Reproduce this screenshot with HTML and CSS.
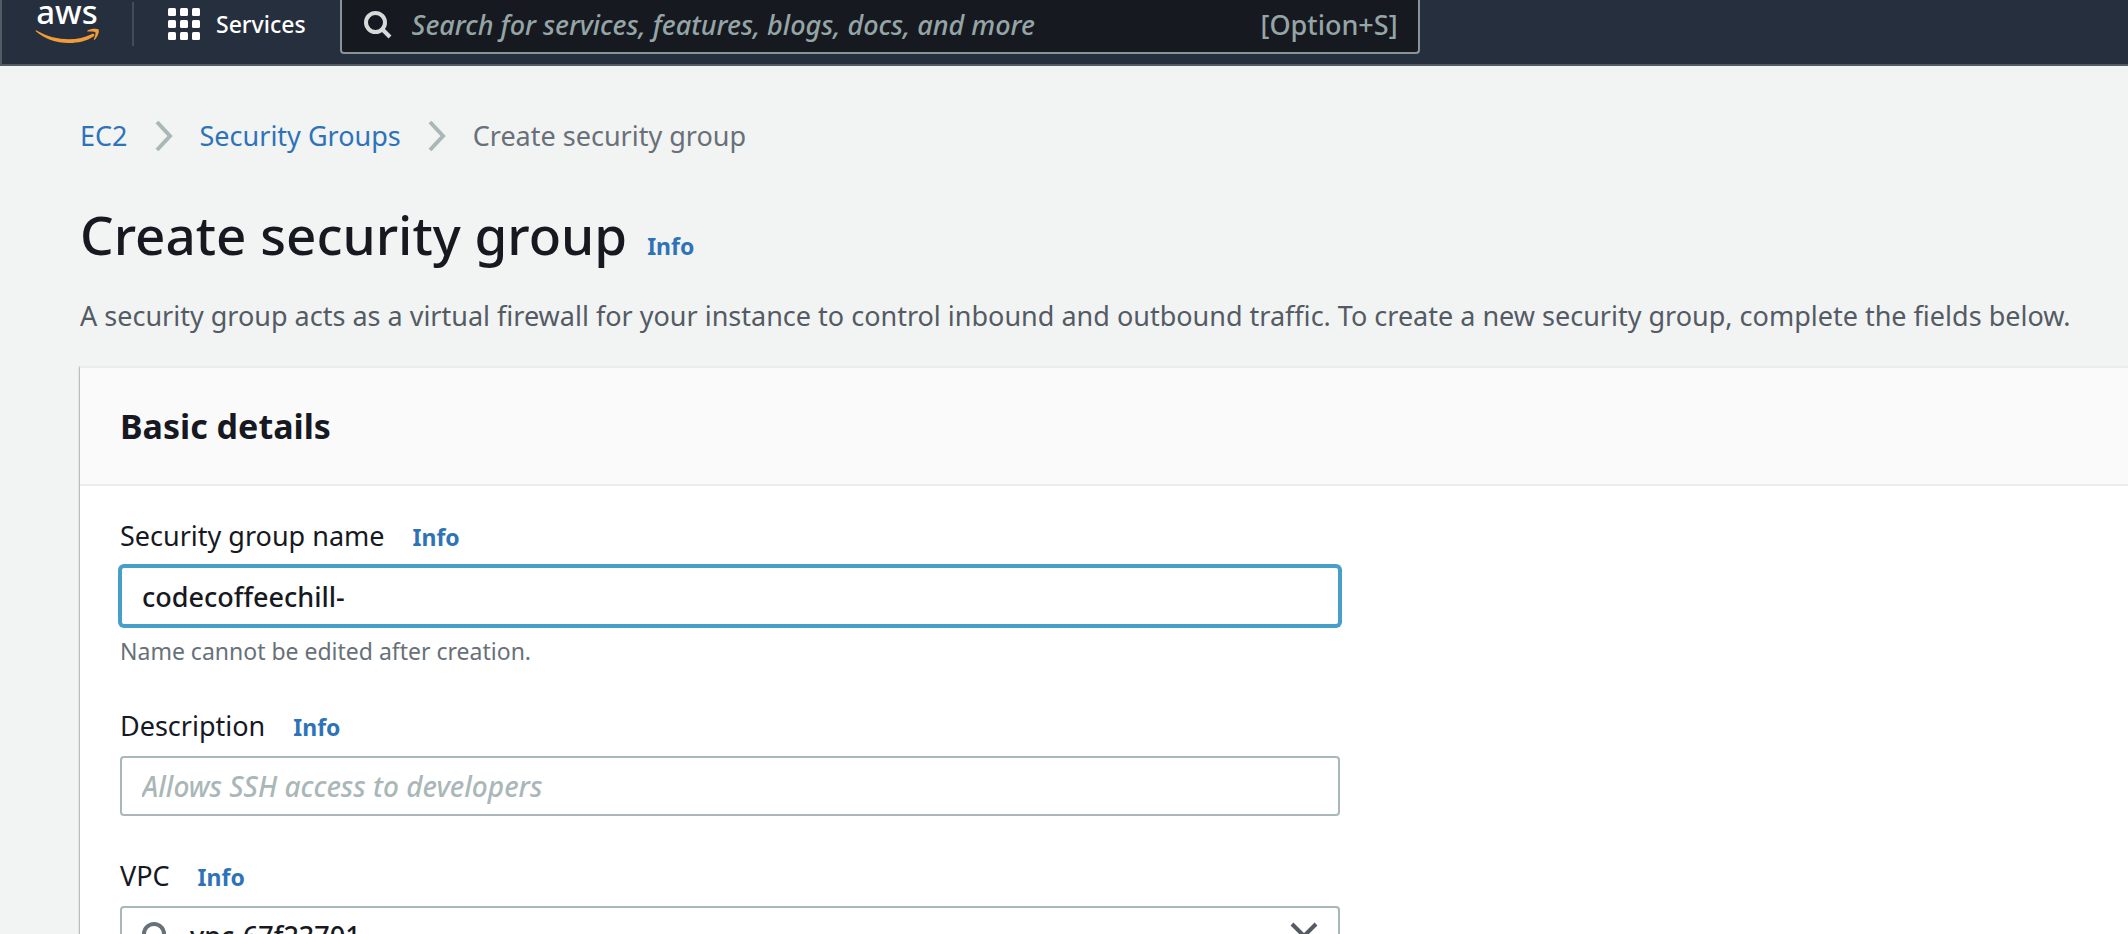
FILE: index.html
```html
<!DOCTYPE html>
<html lang="en">
<head>
<meta charset="utf-8">
<title>Create security group</title>
<link rel="stylesheet" href="styles.css">
</head>
<body>
<header class="topbar">
  <a class="logo" href="#" aria-label="AWS home">
    <svg width="68" height="48" viewBox="0 0 68 48" aria-hidden="true">
      <text class="logo-text" x="33" y="24" text-anchor="middle">aws</text>
      <path fill="#f19d37" d="M2.500 30.500C22 41.500 43 41.500 58 34C60 33 61.500 35 59.500 36.500C53 41 44 43 35 43C21.500 43 10.500 38.500 2 31.500C1.300 30.700 1.800 30 2.500 30.500Z"/>
      <path fill="#f19d37" d="M53.500 30.400C56.500 28.400 63.500 28.200 64.600 29.600C65.600 31.200 63.800 37 61 39.500C60 40.200 59.500 39.900 60 38.800C61 36.500 62 33.200 61.300 32.200C60.500 31.200 56.800 31.300 54.200 31.600C53.200 31.700 52.800 30.900 53.500 30.400Z"/>
    </svg>
  </a>
  <button class="services" type="button">
    <svg width="32" height="32" viewBox="0 0 32 32" fill="#fff" aria-hidden="true">
      <rect width="8" height="8" rx="1.500"/><rect x="12" width="8" height="8" rx="1.500"/><rect x="24" width="8" height="8" rx="1.500"/>
      <rect y="12" width="8" height="8" rx="1.500"/><rect x="12" y="12" width="8" height="8" rx="1.500"/><rect x="24" y="12" width="8" height="8" rx="1.500"/>
      <rect y="24" width="8" height="8" rx="1.500"/><rect x="12" y="24" width="8" height="8" rx="1.500"/><rect x="24" y="24" width="8" height="8" rx="1.500"/>
    </svg>
    <span>Services</span>
  </button>
  <label class="search">
    <svg width="28" height="28" viewBox="0 0 28 28" fill="none" stroke="#d5dbdb" stroke-width="4" aria-hidden="true">
      <circle cx="11.500" cy="11.500" r="9.500"/><path d="M18 18l8 8"/>
    </svg>
    <input class="search-input" type="text" aria-label="Search" placeholder="Search for services, features, blogs, docs, and more">
    <span class="shortcut">[Option+S]</span>
  </label>
</header>

<main class="page">
  <nav class="crumbs" aria-label="Breadcrumb">
    <a href="#">EC2</a>
    <svg width="20" height="32" viewBox="0 0 20 32" fill="none" stroke="#aab7b8" stroke-width="4" aria-hidden="true"><path d="M3 2l13 14L3 30"/></svg>
    <a href="#">Security Groups</a>
    <svg width="20" height="32" viewBox="0 0 20 32" fill="none" stroke="#aab7b8" stroke-width="4" aria-hidden="true"><path d="M3 2l13 14L3 30"/></svg>
    <span>Create security group</span>
  </nav>

  <div class="title-row">
    <h1>Create security group</h1>
    <a class="info" href="#">Info</a>
  </div>
  <p class="lead">A security group acts as a virtual firewall for your instance to control inbound and outbound traffic. To create a new security group, complete the fields below.</p>

  <section class="card">
    <h2>Basic details</h2>
    <form class="fields">
      <div class="field">
        <div class="label-row"><label for="name">Security group name</label><a class="info" href="#">Info</a></div>
        <input class="box active" id="name" type="text" value="codecoffeechill-" spellcheck="false">
        <p class="hint">Name cannot be edited after creation.</p>
      </div>
      <div class="field">
        <div class="label-row"><label for="description">Description</label><a class="info" href="#">Info</a></div>
        <input class="box" id="description" type="text" placeholder="Allows SSH access to developers">
      </div>
      <div class="field">
        <div class="label-row"><label for="vpc">VPC</label><a class="info" href="#">Info</a></div>
        <div class="box picker">
          <svg width="28" height="28" viewBox="0 0 28 28" fill="none" stroke="#687078" stroke-width="4" aria-hidden="true">
            <circle cx="12" cy="12" r="10"/><path d="M19 19l7 7"/>
          </svg>
          <input class="picker-input" id="vpc" type="text" value="vpc-67f23701" spellcheck="false">
          <button class="clear" type="button" aria-label="Clear">
            <svg width="28" height="28" viewBox="0 0 28 28" fill="none" stroke="#545b64" stroke-width="4" aria-hidden="true"><path d="M2 2l24 24M26 2L2 26"/></svg>
          </button>
        </div>
      </div>
    </form>
  </section>
</main>
</body>
</html>
```
FILE: styles.css
```css
* { box-sizing: border-box; }
html { scrollbar-width: none; }
body {
  margin: 0;
  background: #f2f3f3;
  color: #16191f;
  font: 27px/40px "Noto Sans", "Open Sans", sans-serif;
}
h1, h2, p { margin: 0; }
a { color: #2e73b8; text-decoration: none; }
input, button { font: inherit; color: inherit; }
svg { display: block; flex: none; }

.topbar {
  display: flex;
  align-items: flex-start;
  height: 66px;
  background: #262f3e;
  border-bottom: 2px solid #545b64;
  border-left: 2px solid #545b64;
}
.logo {
  padding: 0 32px;
  position: relative;
}
.logo::after {
  content: "";
  position: absolute;
  top: 2px;
  right: 0;
  width: 2px;
  height: 44px;
  background: #424b58;
}
.logo-text { font: 500 33px "Noto Sans", sans-serif; fill: #fff; }
.services {
  display: flex;
  align-items: center;
  gap: 16px;
  height: 48px;
  padding: 0 34px;
  border: 0;
  background: none;
  color: #fff;
  font-size: 23px;
  font-weight: 500;
}
.search {
  display: flex;
  align-items: center;
  gap: 20px;
  flex: 0 1 1080px;
  height: 54px;
  padding: 0 20px 2px 22px;
  border: 2px solid #879596;
  border-top: 0;
  border-radius: 0 0 4px 4px;
  background: #16191f;
  color: #95a5a6;
  font-weight: 500;
}
.search-input {
  flex: 1;
  min-width: 0;
  padding: 0;
  border: 0;
  outline: 0;
  background: none;
}
.search-input::placeholder { color: #95a5a6; font-style: italic; }

.page { padding: 50px 0 0 80px; }
.crumbs {
  display: flex;
  align-items: center;
  gap: 26px;
  color: #687078;
}
.title-row {
  display: flex;
  align-items: baseline;
  gap: 20px;
  margin-top: 47px;
}
h1 { font-size: 53px; line-height: 64px; font-weight: 500; }
.info { font-size: 23px; line-height: 24px; font-weight: 700; }
.lead { margin-top: 29px; color: #545b64; }

.card {
  margin-top: 30px;
  border-top: 2px solid #eaeded;
  background: #fff;
  box-shadow: 0 2px 2px rgba(0, 28, 36, .3), 0 0 2px rgba(0, 28, 36, .5);
  clip-path: inset(0 0 0 -4px);
}
h2 {
  padding: 38px 40px;
  background: #fafafa;
  border-bottom: 2px solid #eaeded;
  font-size: 34px;
  font-weight: 700;
}
.fields {
  display: flex;
  flex-direction: column;
  gap: 42px;
  max-width: 1300px;
  padding: 32px 40px;
}
.label-row {
  display: flex;
  align-items: baseline;
  gap: 28px;
  margin-bottom: 12px;
  line-height: 36px;
}
.box {
  display: block;
  width: 100%;
  height: 60px;
  padding: 0 20px;
  border: 2px solid #aab7b8;
  border-radius: 4px;
  outline: 0;
  background: #fff;
  font-weight: 500;
}
.box::placeholder { color: #aab7b8; font-size: 28px; font-style: italic; opacity: 1; }
.active { border-color: #469fc9; box-shadow: 0 0 0 2px #469fc9; }
.hint { margin-top: 10px; color: #687078; font-size: 23px; line-height: 30px; }
.picker { display: flex; align-items: center; gap: 20px; }
.picker-input {
  flex: 1;
  min-width: 0;
  padding: 0;
  border: 0;
  outline: 0;
  background: none;
}
.clear { padding: 0; border: 0; background: none; }
```
